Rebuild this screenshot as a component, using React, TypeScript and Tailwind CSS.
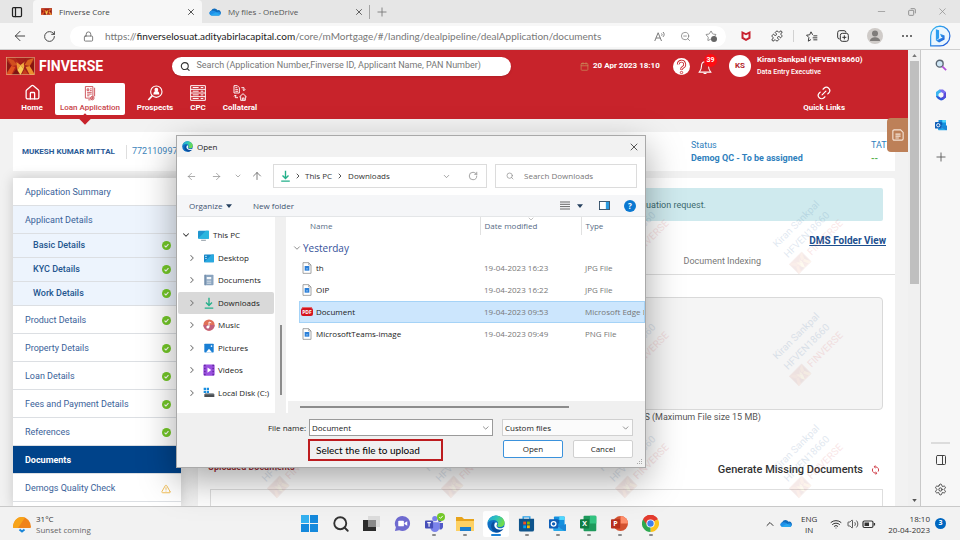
import React from "react";
import {
  AlertTriangle,
  ArrowLeft,
  ArrowRight,
  ArrowUp,
  Calendar,
  ChevronDown,
  ChevronRight,
  ChevronUp,
  House,
  Link2,
  Lock,
  Minus,
  PanelLeft,
  PanelRight,
  Plus,
  Puzzle,
  RotateCw,
  Search,
  Settings,
  Star,
  Volume2,
  Wifi,
  X,
  ZoomOut,
} from "lucide-react";

const rubik = "font-['Roboto','Liberation_Sans',sans-serif]";
const segoe = "font-['Open_Sans','Noto_Sans',sans-serif]";

type Cls = { className?: string };

/* ---------- logos ---------- */

function FinverseLogo({ className }: Cls) {
  return (
    <svg viewBox="0 0 28 18" className={className} aria-hidden="true" preserveAspectRatio="none">
      <rect width="28" height="18" fill="#9c1d1a" />
      <path d="M0 0h9l4 6-7 12H0z" fill="#b3281b" />
      <path d="M1 1l6 2 4 5-5 1z" fill="#d14f1f" />
      <path d="M0 18l5-9 4 1-4 8z" fill="#e0521f" />
      <path d="M1 4l4 5-4 6z" fill="#8a1715" />
      <path d="M9 0h11l-6 7z" fill="#a81f1a" />
      <path d="M10 5l4 3-3 5z" fill="#ef9434" />
      <path d="M14 8l5-4-2 8z" fill="#f3ab40" />
      <path d="M11 13l3-5 3 4-3 6z" fill="#f7cc55" />
      <path d="M28 0h-8l-3 7 5 11h6z" fill="#a3211a" />
      <path d="M27 1l-6 2-3 5 5 1z" fill="#d9641f" />
      <path d="M28 18l-5-9-4 1 4 8z" fill="#ec8f2d" />
      <path d="M27 4l-4 5 4 6z" fill="#86150f" />
      <path d="M6 18l4-6 3 6z" fill="#7b1513" />
      <path d="M15 18l3-6 4 6z" fill="#c4391c" />
      <rect x=".5" y=".5" width="27" height="17" fill="none" stroke="#e8b48a" strokeWidth=".6" />
    </svg>
  );
}

function Cloud({ className }: Cls) {
  return (
    <svg viewBox="0 0 24 16" className={className} aria-hidden="true">
      <path d="M5 14.500A5 5 0 0 1 4.600 5 7 7 0 0 1 17 4.500 5.200 5.200 0 0 1 20 14.500z" fill="#0f6cbd" />
      <path d="M6 6c4-1 7 1 9 3 2-2 6-2 7.500 0 1.500 2.500 0 6-3 6.200H6.500C2 15 0 12 .7 9.500 1.400 7 3.500 6 6 6z" fill="#1f8fe8" />
      <path d="M3 14l11-5.500 8.500 4.500c-.8 1.500-2 2.200-3.500 2.200H6.500C5 15.200 3.800 14.800 3 14z" fill="#28a8f0" />
    </svg>
  );
}

function EdgeLogo({ className }: Cls) {
  return (
    <svg viewBox="0 0 24 24" className={className} aria-hidden="true">
      <defs>
        <linearGradient id="edgeTop" x1="0" y1="0" x2="1" y2=".4">
          <stop offset="0" stopColor="#1fa4e0" />
          <stop offset=".55" stopColor="#30c6b8" />
          <stop offset="1" stopColor="#6fdc4b" />
        </linearGradient>
      </defs>
      <circle cx="12" cy="12" r="11.500" fill="#0f6fc4" />
      <path d="M.8 11C1.500 5 6 .5 12 .5c7 0 11.500 5 11.500 9.800 0 3.700-2.800 5.700-6 5.700-2.700 0-3.800-1-3.800-1.800s1-1.200 1-3C14.700 8.500 12 6.800 9 6.800 5 6.800 1.800 8.500.8 11z" fill="url(#edgeTop)" />
      <path d="M9 8.500c-2.500 1.600-4 4.300-3.500 7.500.6 4 4 7 8 7.300 3.600-.2 6.800-2.200 8.500-5-2.500 1.500-7.500 2-10.500-.4C9 16 8.500 13 9.800 10.500z" fill="#0a4f9e" />
      <path d="M13.700 11c0 1.500-1 2-1 3.200 0 1.800 2 3.600 5 3.600 2 0 4.500-.8 5.500-2l-.9 2.600c-2.600 1.500-7.700 1.700-10.500-.8-2.400-2-2.600-5-.9-7.300 1.300-.6 2.800-.3 2.800.7z" fill="#fff" />
    </svg>
  );
}

function OutlookLogo({ className }: Cls) {
  return (
    <svg viewBox="0 0 24 24" className={className} aria-hidden="true">
      <rect x="7" y="2" width="15" height="14" rx="1" fill="#1490df" />
      <rect x="14.500" y="2" width="7.500" height="5" fill="#50d9ff" />
      <rect x="7" y="7" width="7.500" height="5" fill="#0a64ad" />
      <path d="M6 13l9 5 9-5v8a1.500 1.500 0 0 1-1.500 1.500h-15A1.500 1.500 0 0 1 6 21z" fill="#28a8ea" />
      <path d="M24 13v8a1.500 1.500 0 0 1-1.500 1.500L11 16z" fill="#1a86d6" />
      <rect x="0" y="6" width="13" height="13" rx="1.200" fill="#0f5fb8" />
      <circle cx="6.500" cy="12.500" r="3.300" fill="none" stroke="#fff" strokeWidth="1.800" />
    </svg>
  );
}

function BingLogo({ className }: Cls) {
  return (
    <svg viewBox="0 0 24 24" className={className} aria-hidden="true">
      <defs>
        <linearGradient id="bing" x1="0" y1="0" x2="1" y2="1">
          <stop offset="0" stopColor="#37bdf3" />
          <stop offset="1" stopColor="#1b4fd6" />
        </linearGradient>
      </defs>
      <path d="M12 1.200a10.800 10.800 0 1 1 0 21.600H1.800V12A10.500 10.500 0 0 1 12 1.200z" fill="#eaf6fe" stroke="url(#bing)" strokeWidth="1.300" />
      <path d="M7.500 4.500l3.500 1.200v8.800L7.500 17z" fill="#2a9df0" />
      <path d="M7.500 17l3.500 2.200 6-3.500v-4.200l-5-2 1.300 3.200 1.700.9z" fill="url(#bing)" />
    </svg>
  );
}

function Microsoft365({ className }: Cls) {
  return (
    <svg viewBox="0 0 24 24" className={className} aria-hidden="true">
      <path d="M9 1h7l6 5v6l-5-3-5-3-5 3z" fill="#7a6ff0" />
      <path d="M9 1L2 6v10l5 4V10l5-4z" fill="#3bb5f0" />
      <path d="M2 14l6 1 4 3 5-3 5-3v5l-6 5-4 1-6-3z" fill="#2b57d8" />
      <path d="M22 7v8l-5 5-5-2 5-3V9z" fill="#5a4bd8" />
      <path d="M12 8l4 2v4l-4 2-4-2v-4z" fill="#f7f7f7" />
    </svg>
  );
}

function McAfee({ className }: Cls) {
  return (
    <svg viewBox="0 0 20 20" className={className} aria-hidden="true">
      <path d="M1 0l9 4.500L19 0v15l-9 5-9-5z" fill="#c8202f" />
      <path d="M5 6l5 2.600L15 6v6.700L10 15.500l-5-2.800z" fill="#f7f7f7" />
    </svg>
  );
}

function CheckBadge({ className }: Cls) {
  return (
    <svg viewBox="0 0 16 16" className={className} role="img" aria-label="Completed">
      <circle cx="8" cy="8" r="8" fill="#74c928" />
      <path d="M4.500 8.200l2.500 2.500 4.500-5" fill="none" stroke="#fff" strokeWidth="2" />
    </svg>
  );
}

/* ---------- page header icons ---------- */

function LoanIcon({ className }: Cls) {
  return (
    <svg viewBox="0 0 20 26" className={className} fill="none" stroke="currentColor" strokeWidth="1.500" aria-hidden="true">
      <path d="M2 1h13v20H2zM5 5h3v3H5zM10 5h3M10 8h3M5 11h8M5 14h8M5 17h4M18 3v15" />
      <circle cx="14" cy="21" r="3" fill="#fff" />
      <path d="M14 19v4M12 21h4M7 24h4" />
    </svg>
  );
}

function ProspectIcon({ className }: Cls) {
  return (
    <svg viewBox="0 0 24 24" className={className} fill="none" stroke="currentColor" strokeWidth="1.700" aria-hidden="true">
      <circle cx="14" cy="10" r="8.500" />
      <path d="M8 16l-6 6.500" strokeWidth="2.500" />
      <circle cx="14" cy="7" r="2" fill="currentColor" />
      <path d="M10.500 13.500c0-5 7-5 7 0z" fill="currentColor" />
    </svg>
  );
}

function CpcIcon({ className }: Cls) {
  return (
    <svg viewBox="0 0 24 24" className={className} fill="none" stroke="currentColor" strokeWidth="1.500" aria-hidden="true">
      <path d="M1 1h22v22H1zM1 6.500h22M1 12h22M1 17.500h22M4 3.800h9M16 3.800h4M4 9.300h9M16 9.300h4M4 14.800h9M16 14.800h4M4 20.300h9M16 20.300h4" />
    </svg>
  );
}

function CollateralIcon({ className }: Cls) {
  return (
    <svg viewBox="0 0 24 24" className={className} fill="none" stroke="currentColor" strokeWidth="1.400" aria-hidden="true">
      <path d="M3 1h5l3 3v8H3zM5 4h3M5 7h4M5 9.500h4M14 4h4v4M16 6.500l2 2 2-2M5 15v4h4M3 17l2-2 2 2" />
      <path d="M11 18l5.500-5 5.500 5M13 17v6h7v-6M15.500 23v-3.500h2.500V23" />
    </svg>
  );
}

function HelpIcon({ className }: Cls) {
  return (
    <svg viewBox="0 0 24 24" className={className} fill="none" aria-hidden="true">
      <circle cx="12" cy="12" r="12" fill="#fff" />
      <path d="M7.500 9a4.500 4.500 0 1 1 6.500 4c-1.500 1-2 1.500-2 3.500" stroke="#c8232b" strokeWidth="4" />
      <path d="M7.500 9a4.500 4.500 0 1 1 6.500 4c-1.500 1-2 1.500-2 3" stroke="#fff" strokeWidth="1.500" />
      <circle cx="12" cy="20.500" r="1.700" stroke="#c8232b" strokeWidth="1.200" />
    </svg>
  );
}

function BellIcon({ className }: Cls) {
  return (
    <svg viewBox="0 0 24 26" className={className} fill="none" stroke="#fff" strokeWidth="1.800" aria-hidden="true">
      <path d="M12 3c-4 0-6 3-6 7 0 6-2 8-4 11h20c-2-3-4-5-4-11 0-4-2-7-6-7zM9.500 23.500h5M12 3V1" />
    </svg>
  );
}

function SyncIcon({ className }: Cls) {
  return (
    <svg viewBox="0 0 20 22" className={className} fill="none" stroke="#d0404a" strokeWidth="2.200" aria-hidden="true">
      <path d="M10 4a7 7 0 0 1 6 10.500M10 18A7 7 0 0 1 4 7.500" />
      <path d="M10 0v8L6 4zM10 22v-8l4 4z" fill="#d0404a" stroke="none" />
    </svg>
  );
}

/* ---------- dialog icons ---------- */

function DownloadGlyph({ className }: Cls) {
  return (
    <svg viewBox="0 0 12 14" className={className} fill="none" stroke="#23b08a" strokeWidth="1.600" aria-hidden="true">
      <path d="M6 1v9M2.500 6.500L6 10l3.500-3.500M1 13h10" />
    </svg>
  );
}

function PcGlyph({ className }: Cls) {
  return (
    <svg viewBox="0 0 16 14" className={className} aria-hidden="true">
      <rect x="1" y="1" width="14" height="10" rx="1" fill="#1f95cf" />
      <path d="M1 11L11 1h4v10z" fill="#2bb6df" />
      <path d="M5 12.500h6v1H5z" fill="#6c7a86" />
    </svg>
  );
}

function DesktopGlyph({ className }: Cls) {
  return (
    <svg viewBox="0 0 16 14" className={className} aria-hidden="true">
      <rect x="1" y="2" width="14" height="11" rx="1" fill="#1486c8" />
      <path d="M1 13L12 2h3v11z" fill="#29a9e0" />
      <path d="M3 4h1.500v1.500H3zM3 7h1.500v1.500H3z" fill="#fff" />
    </svg>
  );
}

function DocumentsGlyph({ className }: Cls) {
  return (
    <svg viewBox="0 0 14 16" className={className} aria-hidden="true">
      <rect x="1" y="1" width="12" height="14" rx="1" fill="#8aa4bf" />
      <path d="M4 4h6v3H4zM4 9h6v1H4zM4 11.500h6v1H4z" fill="#f2f6fa" />
      <path d="M1 1h1.500v14H1z" fill="#6a86a4" />
    </svg>
  );
}

function MusicGlyph({ className }: Cls) {
  return (
    <svg viewBox="0 0 16 16" className={className} aria-hidden="true">
      <circle cx="8" cy="8" r="7.500" fill="#e07058" />
      <path d="M.5 8a7.500 7.500 0 0 0 15 0z" fill="#c1607c" />
      <circle cx="6.500" cy="10.500" r="2" fill="#fff" />
      <path d="M8 10.500V4l3 1.200" fill="none" stroke="#fff" strokeWidth="1.200" />
    </svg>
  );
}

function PicturesGlyph({ className }: Cls) {
  return (
    <svg viewBox="0 0 16 16" className={className} aria-hidden="true">
      <rect x=".5" y="1" width="15" height="14" rx="1" fill="#1a7fd4" />
      <path d="M3 15l5-6 5 6z" fill="#fff" />
      <circle cx="12" cy="5" r="1.300" fill="#fff" />
    </svg>
  );
}

function VideosGlyph({ className }: Cls) {
  return (
    <svg viewBox="0 0 16 16" className={className} aria-hidden="true">
      <rect x=".5" y=".5" width="15" height="15" rx="1.500" fill="#9a4fdf" />
      <path d="M6 4.500l5 3.500-5 3.500z" fill="#fff" />
      <path d="M2.500 1v14M13.500 1v14" stroke="#4b1c86" strokeWidth="1.500" strokeDasharray="2 2" />
    </svg>
  );
}

function DiskGlyph({ className }: Cls) {
  return (
    <svg viewBox="0 0 18 16" className={className} aria-hidden="true">
      <path d="M1 0h3.500v3.500H1zM5.500 0H9v3.500H5.500zM1 4.500h3.500V8H1zM5.500 4.500H9V8H5.500z" fill="#1a8fe0" />
      <path d="M2 10l2-1.500h11L17 10v4H2z" fill="#4a4f54" />
      <path d="M2 10l2-1.500h11L17 10z" fill="#a9b0b6" />
    </svg>
  );
}

function ImageFile({ className }: Cls) {
  return (
    <svg viewBox="0 0 14 18" className={className} aria-hidden="true">
      <path d="M1 1h8.500L13 4.500V17H1z" fill="#fff" stroke="#8d8d8d" strokeWidth="1.200" />
      <path d="M9.500 1v3.500H13" fill="none" stroke="#8d8d8d" />
      <rect x="3.500" y="6" width="7" height="7" fill="#2b7fd8" />
      <path d="M5.500 11l1.500-2 1.500 2z" fill="#bfe0fb" />
    </svg>
  );
}

function PdfFile() {
  return (
    <span className="flex h-2.5 w-3 flex-col">
      <span className="mx-px h-px bg-[#e26a6d]" />
      <span className="flex h-2 items-center justify-center rounded-xs bg-[#d5151f] text-[5px] leading-none font-bold text-white">PDF</span>
    </span>
  );
}

/* ---------- browser chrome ---------- */

function TabStrip() {
  return (
    <div className="flex h-[23px] shrink-0 items-end bg-[#e6e6e6] pr-3 text-[8px]">
      <button aria-label="Tab actions" className="flex h-full w-[33px] items-center justify-center">
        <PanelLeft className="size-3 text-[#222]" strokeWidth={2.5} />
      </button>
      <div className="flex h-full w-[169px] items-center rounded-t bg-[#f7f7f7] pr-1 pl-2">
        <FinverseLogo className="h-[7px] w-[11px]" />
        <span className="ml-[7px] flex-1 text-[#444]">Finverse Core</span>
        <button aria-label="Close tab Finverse Core" className="px-0.5"><X className="size-2.5 text-[#333]" /></button>
      </div>
      <div className="flex h-full w-[167px] items-center pr-[3px] pl-[7px]">
        <Cloud className="h-2 w-3" />
        <span className="ml-[7px] flex-1 text-[#555]">My files - OneDrive</span>
        <button aria-label="Close tab My files" className="px-0.5"><X className="size-2.5 text-[#444]" /></button>
      </div>
      <span className="mb-1 h-3.5 w-px bg-[#a5a5a5]" />
      <button aria-label="New tab" className="flex h-full w-[24px] items-center justify-center"><Plus className="size-3.5 text-[#777]" strokeWidth={1.5} /></button>
      <div className="ml-auto flex h-full items-center gap-[21px] text-[#8a8a8a]">
        <button aria-label="Minimize"><Minus className="size-[11px]" strokeWidth={1.5} /></button>
        <button aria-label="Restore">
          <svg viewBox="0 0 12 12" className="size-2" fill="none" stroke="currentColor" strokeWidth="1.400"><rect x="1" y="3.500" width="7.500" height="7.500" rx="1" /><path d="M4 1h5.500A1.500 1.500 0 0 1 11 2.500V8" /></svg>
        </button>
        <button aria-label="Close window"><X className="size-[11px]" strokeWidth={1.500} /></button>
      </div>
    </div>
  );
}

function Toolbar() {
  return (
    <div className="flex h-[27px] shrink-0 items-center border-b border-[#cfcfcf] bg-[#f7f7f7] pl-3">
      <button aria-label="Back" className="w-[31px]"><ArrowLeft className="size-4 text-[#444]" strokeWidth={1.500} /></button>
      <button aria-label="Refresh" className="w-[27px]"><RotateCw className="size-[13px] text-[#444]" strokeWidth={1.800} /></button>
      <div className="flex h-[21px] flex-1 items-center rounded-full bg-white pr-[9px] pl-[13px]">
        <Lock className="size-[11px] text-[#666]" strokeWidth={1.800} />
        <div role="textbox" aria-label="Address" contentEditable suppressContentEditableWarning className="ml-[11px] flex-1 font-['Lato',sans-serif] text-[10px] whitespace-nowrap text-[#777]">
          https://<span className="text-[#222]">finverselosuat.adityabirlacapital.com</span>/core/mMortgage/#/landing/dealpipeline/dealApplication/documents
        </div>
        <div className="flex items-center gap-[14px] text-[#777]">
          <button aria-label="Read aloud">
            <svg viewBox="0 0 16 14" className="h-[11px] w-3" fill="none" stroke="currentColor" strokeWidth="1.300"><path d="M1 13L5.500 2 10 13M2.500 9h6M10 3c1 1 1 2 0 3M12 1c2 2 2 4.500 0 6.500" /></svg>
          </button>
          <button aria-label="Zoom out"><ZoomOut className="size-[11px]" strokeWidth={1.600} /></button>
          <button aria-label="Add to favorites" className="flex items-end"><Star className="size-3" strokeWidth={1.600} /><span className="-ml-1.5 size-1.5 rounded-full bg-[#666]" /></button>
        </div>
      </div>
      <div className="ml-[15px] flex items-center text-[#333]">
        <button aria-label="McAfee WebAdvisor"><McAfee className="size-2.5" /></button>
        <button aria-label="Extensions" className="ml-5"><Puzzle className="size-3" strokeWidth={1.800} /></button>
        <span className="ml-2.5 h-3 w-px bg-[#d2d2d2]" />
        <button aria-label="Favorites" className="ml-3">
          <svg viewBox="0 0 18 16" className="h-[11px] w-3" fill="none" stroke="currentColor" strokeWidth="1.400"><path d="M10 5.500L7.500 1 5.500 5.500.8 6 4.300 9.500 3.500 15l4-2.500M11 7h6M10 10h7M11 13h6" /></svg>
        </button>
        <button aria-label="Collections" className="ml-[19px]">
          <svg viewBox="0 0 18 18" className="size-3" fill="none" stroke="currentColor" strokeWidth="1.500"><path d="M4 13.500A3 3 0 0 1 1 10.500V4a3 3 0 0 1 3-3h6.500a3 3 0 0 1 3 3" /><rect x="5" y="5" width="12" height="12" rx="3" /><path d="M11 8v6M8 11h6" /></svg>
        </button>
        <button aria-label="Profile" className="ml-[18px] flex size-4 items-center justify-center overflow-hidden rounded-full bg-[#cfcbc8]">
          <svg viewBox="0 0 16 16" className="size-4" fill="#7f7c7a"><circle cx="8" cy="5.500" r="3" /><path d="M3 13c0-5 10-5 10 0z" /></svg>
        </button>
        <button aria-label="More" className="ml-[19px] flex gap-0.5"><span className="size-0.5 rounded-full bg-[#444]" /><span className="size-0.5 rounded-full bg-[#444]" /><span className="size-0.5 rounded-full bg-[#444]" /></button>
      </div>
      <button aria-label="Bing" className="z-10 flex w-12 justify-end pr-[9px]"><BingLogo className="size-[22px] shrink-0" /></button>
    </div>
  );
}

/* ---------- application page ---------- */

const navItems = [
  { label: "Home", icon: <House className="size-[17px]" strokeWidth={1.800} />, box: "w-[46px]" },
  { label: "Loan Application", icon: <LoanIcon className="h-[15px] w-3" />, box: "w-[70px]" },
  { label: "Prospects", icon: <ProspectIcon className="size-4" />, box: "w-[60px]" },
  { label: "CPC", icon: <CpcIcon className="size-4" />, box: "w-[26px]" },
  { label: "Collateral", icon: <CollateralIcon className="size-4" />, box: "w-[58px]" },
];

function AppHeader() {
  return (
    <header className="h-[69px] shrink-0 bg-[#c8232b] text-white">
      <div className="flex h-8 items-center pl-1.5">
        <FinverseLogo className="h-[18px] w-[29px]" />
        <span className="ml-1 w-[133px] text-[14px] font-bold">FINVERSE</span>
        <label className="flex h-[19px] w-[339px] items-center rounded-full bg-white px-2 shadow-sm">
          <Search className="size-[11px] text-[#333]" strokeWidth={2.500} />
          <input aria-label="Search applications" placeholder="Search (Application Number,Finverse ID, Applicant Name, PAN Number)" className="ml-1.5 w-full text-[9px] outline-none placeholder:text-[#777]" />
        </label>
        <span className="ml-auto flex w-[93px] items-center gap-1 text-[8px] font-bold whitespace-nowrap">
          <Calendar className="size-[9px] text-[#c98a5a]" strokeWidth={2} />
          20 Apr 2023 18:10
        </span>
        <button aria-label="Help"><HelpIcon className="size-[17px]" /></button>
        <button aria-label="Notifications" className="relative ml-2 pt-0.5">
          <BellIcon className="h-[15px] w-3.5" />
          <span className="absolute -top-1 left-1.5 flex size-[13px] items-center justify-center rounded-full bg-[#ff0c12] text-[7px] font-bold">39</span>
        </button>
        <span className="ml-[17px] flex size-[22px] items-center justify-center rounded-full bg-white text-[8px] font-bold text-[#b3262c]">KS</span>
        <div className="ml-1.5 w-[151px] leading-3">
          <p className="text-[8px] font-bold">Kiran Sankpal (HFVEN18660)</p>
          <p className="text-[7px] font-medium">Data Entry Executive</p>
        </div>
      </div>
      <nav className="flex h-[37px] pr-[63px] pl-[9px]">
        {navItems.map((n) => {
          const on = n.label === "Loan Application";
          return (
            <a
              key={n.label}
              href="#"
              className={`relative mt-px flex h-8 shrink-0 flex-col items-center justify-center gap-px text-[8px] leading-[12px] whitespace-nowrap ${n.box} ${on ? "rounded-xs bg-white pt-px font-medium text-[#c8434a]" : "font-bold"}`}
            >
              {n.icon}
              {n.label}
              {on && <span className="absolute -bottom-2 left-[26px] size-2 rotate-45 bg-[#c8232b]" />}
            </a>
          );
        })}
        <a href="#" className="mt-px ml-auto flex h-8 flex-col items-center justify-center gap-px text-[8px] leading-[12px] font-bold">
          <Link2 className="size-4 -rotate-45" strokeWidth={1.800} />
          Quick Links
        </a>
      </nav>
    </header>
  );
}

const menu: { label: string; kind?: "open" | "sub" | "active"; mark?: "ok" | "warn" }[] = [
  { label: "Application Summary" },
  { label: "Applicant Details", kind: "open" },
  { label: "Basic Details", kind: "sub", mark: "ok" },
  { label: "KYC Details", kind: "sub", mark: "ok" },
  { label: "Work Details", kind: "sub", mark: "ok" },
  { label: "Product Details", mark: "ok" },
  { label: "Property Details", mark: "ok" },
  { label: "Loan Details", mark: "ok" },
  { label: "Fees and Payment Details", mark: "ok" },
  { label: "References", mark: "ok" },
  { label: "Documents", kind: "active" },
  { label: "Demogs Quality Check", mark: "warn" },
];

function SideMenu() {
  return (
    <nav className="w-[168px] shrink-0 bg-white text-[9px] shadow-[0_0_12px_rgba(0,0,0,0.18)]">
      {menu.map((m) => (
        <a
          key={m.label}
          href="#"
          className={`flex items-center justify-between border-b border-[#dcdfe3] pr-2.5 ${
            m.kind === "sub"
              ? "h-6 bg-[#edf4fd] pl-5 font-medium text-[#24568f]"
              : m.kind === "active"
                ? "h-7 bg-[#00438a] pt-0.5 pl-3 font-bold text-white"
                : m.kind === "open"
                  ? "h-7 bg-[#edf4fd] pt-0.5 pl-3 text-[#3a6299]"
                  : "h-7 bg-white pt-0.5 pl-3 text-[#3a6299]"
          }`}
        >
          {m.label}
          {m.mark === "ok" && <CheckBadge className="size-[9px]" />}
          {m.mark === "warn" && <AlertTriangle className="size-2.5 text-[#f0b43a]" strokeWidth={2} />}
        </a>
      ))}
    </nav>
  );
}

const stamps = [false, false, true, true, false, false, true, true, true, true, true, true];

function Watermarks() {
  return (
    <div className="pointer-events-none absolute inset-x-0 top-0 grid grid-cols-[repeat(4,174px)] opacity-15" aria-hidden="true">
      {stamps.map((on, i) => (
        <div key={i} className="flex h-28 items-center justify-center">
          {on && (
            <div className="flex -rotate-45 flex-col items-center text-[10px] leading-[15px] whitespace-nowrap text-[#3a6aa0]">
              <span>Kiran Sankpal</span>
              <span>HFVEN18660</span>
              <span className="flex items-center gap-1 text-[#d8575d]"><FinverseLogo className="h-3.5 w-[18px] opacity-60" />FINVERSE</span>
            </div>
          )}
        </div>
      ))}
    </div>
  );
}

function DocumentsPanel() {
  return (
    <main className="relative flex flex-1 flex-col overflow-hidden rounded-t-xs bg-white">
      <div className="mx-3 mt-2.5 flex h-[33px] shrink-0 items-center justify-end rounded-xs bg-[#cfeaee] pt-0.5 pr-[177px] text-[9px] text-[#3d6a70]">uation request.</div>
      <div className="flex h-[39px] shrink-0 items-center justify-end pr-[9px]">
        <a href="#" className="text-[10px] font-bold text-[#1c4f8f] underline">DMS Folder View</a>
      </div>
      <div className="flex h-[15px] shrink-0 justify-end border-b border-[#dedede] pr-[134px]">
        <button className="-mt-2.5 text-[9px] text-[#777]">Document Indexing</button>
      </div>
      <div className="mx-3 mt-[22px] h-[113px] shrink-0 rounded border border-[#d9d9d9] bg-[#f5f5f5]" />
      <p className="mt-px pr-[134px] text-right text-[9px] leading-[13px] text-[#555]">S (Maximum File size 15 MB)</p>
      <div className="mt-[34px] flex items-center justify-between pr-[15px] pl-2.5">
        <h2 className="text-[9px] font-bold text-[#a3343a]">Uploaded Documents</h2>
        <div className="flex items-center gap-2 pt-1">
          <span className="text-[11px] leading-4 font-medium text-[#333]">Generate Missing Documents</span>
          <button aria-label="Refresh missing documents"><SyncIcon className="h-2.5 w-[9px]" /></button>
        </div>
      </div>
      <div className="mx-3 mt-[11px] flex-1 border border-b-0 border-[#dedede]" />
      <Watermarks />
    </main>
  );
}

function CustomerBar() {
  return (
    <section className="mx-[13px] mt-[13px] flex h-[39px] shrink-0 items-center bg-white pr-2 pl-[9px]">
      <span className="w-[105px] border-r border-[#dedede] py-px text-[8px] font-bold whitespace-nowrap text-[#2a5a96]">MUKESH KUMAR MITTAL</span>
      <span className="ml-[5px] text-[9px] text-[#3d85bb]">772110997</span>
      <div className="ml-auto w-[180px] leading-[13px] text-[#2f7fbd]">
        <p className="text-[9px]">Status</p>
        <p className="text-[9px] font-bold">Demog QC - To be assigned</p>
      </div>
      <div className="w-4 leading-[13px] text-[#2f7fbd]">
        <p className="text-[9px]">TAT</p>
        <p className="text-[9px] font-bold text-[#55b04d]">--</p>
      </div>
    </section>
  );
}

/* ---------- file dialog ---------- */

const tree = [
  { label: "Desktop", icon: <DesktopGlyph className="h-2.5 w-3" /> },
  { label: "Documents", icon: <DocumentsGlyph className="h-3 w-3" /> },
  { label: "Downloads", icon: <DownloadGlyph className="h-3 w-3" /> },
  { label: "Music", icon: <MusicGlyph className="h-3 w-3" /> },
  { label: "Pictures", icon: <PicturesGlyph className="h-2.5 w-3" /> },
  { label: "Videos", icon: <VideosGlyph className="h-3 w-3" /> },
  { label: "Local Disk (C:)", icon: <DiskGlyph className="h-3 w-3" /> },
];

const files = [
  { name: "th", date: "19-04-2023 16:23", type: "JPG File" },
  { name: "OIP", date: "19-04-2023 16:22", type: "JPG File" },
  { name: "Document", date: "19-04-2023 09:53", type: "Microsoft Edge D" },
  { name: "MicrosoftTeams-image", date: "19-04-2023 09:49", type: "PNG File" },
];

function FileDialog() {
  return (
    <div role="dialog" aria-label="Open" className={`absolute top-[135px] left-44 z-20 flex w-[470px] flex-col border border-[#a9a9a9] bg-white text-[8px] text-[#222] shadow-[0_12px_34px_rgba(0,0,0,0.35)] ${segoe}`}>
      <div className="flex h-[21px] items-center bg-[#f2f2f2] pr-[5px] pl-[5px]">
        <EdgeLogo className="size-[11px]" />
        <span className="ml-1 flex-1">Open</span>
        <button aria-label="Close dialog"><X className="size-3" strokeWidth={1.500} /></button>
      </div>
      <div className="flex h-[38px] items-center pr-2 pl-[9px] text-[#888]">
        <button aria-label="Back" className="w-[25px]"><ArrowLeft className="size-[11px]" strokeWidth={1.500} /></button>
        <button aria-label="Forward" className="w-[23px]"><ArrowRight className="size-[11px]" strokeWidth={1.500} /></button>
        <button aria-label="Recent" className="w-[17px]"><ChevronDown className="size-2" strokeWidth={2} /></button>
        <button aria-label="Up" className="w-[22px]"><ArrowUp className="size-3 text-[#555]" strokeWidth={1.500} /></button>
        <div className="flex h-6 flex-1 items-center border border-[#dcdcdc] pr-2 pl-1.5 text-[#333]">
          <DownloadGlyph className="h-3 w-[11px]" />
          <ChevronRight className="mx-[3px] size-2" strokeWidth={2.500} />
          <button>This PC</button>
          <ChevronRight className="mx-1 size-2" strokeWidth={2.500} />
          <button>Downloads</button>
          <button aria-label="Previous locations" className="ml-auto"><ChevronDown className="size-[9px] text-[#777]" strokeWidth={1.800} /></button>
          <button aria-label="Refresh folder" className="ml-[17px]"><RotateCw className="size-2.5 text-[#888]" strokeWidth={1.800} /></button>
        </div>
        <label className="ml-2 flex h-6 w-[142px] items-center border border-[#dcdcdc] pl-2.5">
          <Search className="size-2 text-[#888]" strokeWidth={2} />
          <input aria-label="Search Downloads" placeholder="Search Downloads" className="ml-2.5 w-[110px] outline-none placeholder:text-[#777]" />
        </label>
      </div>
      <div className="flex h-[22px] items-center border-b border-[#e4e6e8] bg-[#f5f6f8] pr-[9px] pl-3 text-[#3d5270]">
        <button className="flex w-16 items-center gap-1">Organize <svg viewBox="0 0 8 5" className="h-1 w-1.5"><path d="M0 0h8L4 5z" fill="#26415f" /></svg></button>
        <button>New folder</button>
        <button aria-label="View" className="ml-auto"><svg viewBox="0 0 10 9" className="h-[9px] w-2.5"><path d="M0 1h10M0 3.300h10M0 5.600h10M0 8h10" stroke="#666" /></svg></button>
        <button aria-label="View options" className="ml-[7px]"><svg viewBox="0 0 8 5" className="h-1 w-1.5"><path d="M0 0h8L4 5z" fill="#26415f" /></svg></button>
        <button aria-label="Preview pane" className="ml-4"><svg viewBox="0 0 12 10" className="h-[9px] w-[11px]"><rect x=".5" y=".5" width="11" height="9" fill="#fff" stroke="#2d4a63" /><path d="M7.500 1H11v8H7.500z" fill="#2b9be0" /></svg></button>
        <button aria-label="Help" className="ml-3.5 flex size-3 items-center justify-center rounded-full bg-[#0a78d1] font-bold text-white">?</button>
      </div>
      <div className="flex h-[196px]">
        <div className="w-[98px] shrink-0 pt-[7px]">
          <ul className="flex h-[180px] flex-col">
            <li className="flex flex-1 items-center pl-1">
              <ChevronDown className="size-2.5 text-[#333]" strokeWidth={2.500} />
              <PcGlyph className="mr-[3px] ml-1.5 h-[11px] w-[13px]" />
              This PC
            </li>
            {tree.map((t) => (
              <li key={t.label} className={`mx-px flex flex-1 items-center rounded-xs pl-[9px] whitespace-nowrap ${t.label === "Downloads" ? "bg-[#d9d9d9]" : ""}`}>
                <ChevronRight className="size-2.5 shrink-0 text-[#777]" strokeWidth={2.500} />
                <span className="mr-[3px] ml-1.5 shrink-0">{t.icon}</span>
                {t.label}
              </li>
            ))}
          </ul>
        </div>
        <div className="flex w-[11px] shrink-0 justify-center bg-[#f0f0f0]"><span className="mt-[108px] h-[70px] w-0.5 bg-[#8c8c8c]" /></div>
        <div className="flex min-w-0 flex-1 flex-col">
          <div className="flex-1 overflow-hidden pl-[13px]">
            <table className="w-full table-fixed border-collapse text-left">
              <colgroup><col /><col className="w-[101px]" /><col className="w-16" /></colgroup>
              <thead>
                <tr className="h-[18px] text-[#566b85]">
                  <th className="border-r border-[#e1e1e1] p-0 pl-[11px] font-normal">Name</th>
                  <th className="relative border-r border-[#e1e1e1] p-0 pl-1 font-normal">Date modified<ChevronDown className="absolute -top-0.5 left-[46px] size-2 text-[#888]" strokeWidth={1.500} /></th>
                  <th className="p-0 pl-1 font-normal">Type</th>
                </tr>
              </thead>
              <tbody>
                <tr className="h-[22px]">
                  <th colSpan={3} scope="rowgroup" className="p-0 pt-1 font-normal">
                    <span className="-ml-[7px] flex items-center text-[10px] leading-[14px] text-[#35509a]"><ChevronDown className="mr-px size-2.5 text-[#777]" />Yesterday</span>
                  </th>
                </tr>
                {files.map((f) => (
                  <tr key={f.name} className={`h-[22px] ${f.name === "Document" ? "bg-[#cce6fd] outline -outline-offset-1 outline-[#a5d3f7]" : ""}`}>
                    <td className="p-0">
                      <span className="flex items-center gap-[3px] pl-0.5">
                        {f.name === "Document" ? <PdfFile /> : <ImageFile className="h-3 w-3" />}
                        {f.name}
                      </span>
                    </td>
                    <td className="p-0 pl-1 text-[#777]">{f.date}</td>
                    <td className="overflow-hidden p-0 pl-1 whitespace-nowrap text-[#777]">{f.type}</td>
                  </tr>
                ))}
              </tbody>
            </table>
          </div>
          <div className="ml-0.5 flex h-3 items-center bg-[#f0f0f0] pl-3"><span className="h-0.5 w-[269px] bg-[#8c8c8c]" /></div>
        </div>
      </div>
      <div className="flex h-[54px] flex-col bg-[#f0f0f0] pt-1.5 pr-3">
        <div className="flex h-[17px] items-center">
          <label htmlFor="file-name" className="w-[132px] pr-[3px] text-right">File name:</label>
          <span className="flex h-full w-[184px] items-center border border-[#9a9a9a] bg-white pr-0.5">
            <input id="file-name" defaultValue="Document" className="w-full pl-0.5 outline-none" />
            <ChevronDown className="size-2.5 text-[#666]" strokeWidth={1.800} />
          </span>
          <span className="ml-[9px] flex h-full flex-1 items-center border border-[#d0d0d0] bg-[#fbfbfb] pr-0.5">
            <select aria-label="File type" className="w-full appearance-none pl-0.5 outline-none"><option>Custom files</option></select>
            <ChevronDown className="size-2.5 text-[#666]" strokeWidth={1.800} />
          </span>
        </div>
        <div className="mt-[3px] flex h-[22px] items-start pl-[131px]">
          <div className="flex h-[22px] w-[135px] items-center border-2 border-[#bd1c1f] pt-px pl-1.5 font-['Lato',sans-serif] text-[10px] text-black">Select the file to upload</div>
          <button className="mt-px ml-auto h-[18px] w-[60px] rounded-xs border border-[#3b92dc] bg-white">Open</button>
          <button className="mt-px ml-2.5 h-[18px] w-[60px] rounded-xs border border-[#d0d0d0] bg-white">Cancel</button>
        </div>
      </div>
      <svg viewBox="0 0 6 6" className="absolute right-0.5 bottom-0.5 size-1.5" fill="#aaa" aria-hidden="true"><path d="M4 0h1v1H4zM4 2h1v1H4zM2 2h1v1H2zM4 4h1v1H4zM2 4h1v1H2zM0 4h1v1H0z" /></svg>
    </div>
  );
}

/* ---------- edge sidebar ---------- */

function EdgeSidebar() {
  return (
    <aside className="flex w-10 shrink-0 flex-col items-center border-l border-[#c9c9c9] bg-[#f7f7f7] pt-[9px] pb-2.5">
      <button aria-label="Search">
        <svg viewBox="0 0 14 14" className="size-3" fill="none"><circle cx="5.500" cy="5.500" r="4" stroke="#5b6672" strokeWidth="1.600" fill="#cfe6f5" /><path d="M8.500 8.500l4.500 4.500" stroke="#b04fd8" strokeWidth="2" /></svg>
      </button>
      <button aria-label="Microsoft 365" className="mt-[18px]"><Microsoft365 className="size-3" /></button>
      <button aria-label="Outlook" className="mt-[18px]"><OutlookLogo className="size-3" /></button>
      <button aria-label="Customize" className="mt-[19px]"><Plus className="size-3.5 text-[#555]" strokeWidth={1.500} /></button>
      <span className="mt-auto h-0.5 w-[19px] bg-[#dcdcdc]" />
      <button aria-label="Hide sidebar" className="mt-2.5"><PanelRight className="size-3 text-[#444]" strokeWidth={2} /></button>
      <button aria-label="Settings" className="mt-[17px]"><Settings className="size-[13px] text-[#444]" strokeWidth={1.800} /></button>
    </aside>
  );
}

/* ---------- taskbar ---------- */

function Letter({ l, tile, back, light }: { l: string; tile: string; back: string; light: string }) {
  return (
    <span className="relative block size-[17px]">
      <svg viewBox="0 0 24 24" className="size-[17px]" aria-hidden="true">
        <rect x="5" y="1" width="18" height="22" rx="1.500" fill={back} />
        <path d="M14 1h7.500A1.500 1.500 0 0 1 23 2.500V12h-9z" fill={light} />
        <rect x="0" y="6" width="13" height="13" rx="1.200" fill={tile} />
      </svg>
      <span className="absolute top-1 left-0 flex size-[9px] items-center justify-center text-[7px] leading-none font-bold text-white">{l}</span>
    </span>
  );
}

const tasks: { name: string; icon: React.ReactNode; run?: boolean; active?: boolean }[] = [
  { name: "Start", icon: <svg viewBox="0 0 17 17" className="size-[17px]"><path d="M0 0h8v8H0zM9 0h8v8H9zM0 9h8v8H0zM9 9h8v8H9z" fill="#1589dc" /><path d="M0 0h8v8H0z" fill="#35b1f0" /></svg> },
  { name: "Search", icon: <Search className="size-[18px] text-[#333]" strokeWidth={2.500} /> },
  { name: "Task View", icon: <svg viewBox="0 0 17 17" className="size-[17px]"><rect x="5" y="1" width="12" height="11" fill="#dcdcdc" /><rect x="0" y="5" width="13" height="11" fill="#2b2b2b" /><path d="M5 5h8v7H5z" fill="#8a8a8a" /></svg> },
  { name: "Chat", icon: <svg viewBox="0 0 18 18" className="size-[17px]"><path d="M9 1a8 8 0 1 1-3.500 15.200L1 17l1-4A8 8 0 0 1 9 1z" fill="#6f6bd0" /><rect x="4.500" y="6" width="6" height="6" rx="1" fill="#fff" /><path d="M11 8.500l3-2v5l-3-2z" fill="#fff" /></svg> },
  {
    name: "Teams", run: true,
    icon: (
      <span className="relative block size-[18px]">
        <svg viewBox="0 0 20 20" className="size-[18px]"><circle cx="11" cy="4" r="3" fill="#7b83eb" /><circle cx="16.500" cy="6" r="2" fill="#5059c9" /><path d="M6 8h10v6a5 5 0 0 1-10 0z" fill="#7b83eb" /><path d="M16 9h4v4a3 3 0 0 1-4 3z" fill="#5059c9" /><rect x="0" y="6" width="9" height="9" rx="1" fill="#464eb8" /><path d="M2.500 8.500h4M4.500 8.500v4.500" stroke="#fff" strokeWidth="1.200" /></svg>
        <CheckBadge className="absolute -top-0.5 -right-0.5 size-2" />
      </span>
    ),
  },
  { name: "File Explorer", run: true, icon: <svg viewBox="0 0 18 16" className="h-4 w-[18px]"><path d="M0 1h6l2 2h10v12H0z" fill="#e8a41c" /><path d="M0 5h18v10H0z" fill="#fdd164" /><path d="M4 11h11v4H4z" fill="#1b7fcf" /></svg> },
  { name: "Edge", run: true, active: true, icon: <EdgeLogo className="size-[18px]" /> },
  { name: "Microsoft Store", run: true, icon: <svg viewBox="0 0 18 18" className="size-[17px]"><path d="M5.500 5V2h7v3" fill="none" stroke="#2ba0e8" strokeWidth="1.500" /><path d="M1 4h16v11.500A2 2 0 0 1 15 17.500H3a2 2 0 0 1-2-2z" fill="#0f548c" /><path d="M5.500 7h3v3h-3z" fill="#f25022" /><path d="M9.500 7h3v3h-3z" fill="#7fba00" /><path d="M5.500 11h3v3h-3z" fill="#00a4ef" /><path d="M9.500 11h3v3h-3z" fill="#ffb900" /></svg> },
  { name: "Outlook", run: true, icon: <OutlookLogo className="size-[17px]" /> },
  { name: "Excel", run: true, icon: <Letter l="X" tile="#107c41" back="#1f9a5c" light="#33c481" /> },
  {
    name: "PowerPoint", run: true,
    icon: (
      <span className="relative block size-[17px]">
        <svg viewBox="0 0 24 24" className="size-[17px]" aria-hidden="true"><circle cx="13.500" cy="12" r="10.500" fill="#d35230" /><path d="M13.500 1.500A10.500 10.500 0 0 1 24 12H13.500z" fill="#ff8f6b" /><rect x="0" y="6" width="13" height="13" rx="1.200" fill="#b7301c" /></svg>
        <span className="absolute top-1 left-0 flex size-[9px] items-center justify-center text-[7px] leading-none font-bold text-white">P</span>
      </span>
    ),
  },
  {
    name: "Chrome", run: true,
    icon: (
      <svg viewBox="0 0 24 24" className="size-[17px]">
        <path d="M12 12L1.600 6A12 12 0 0 1 22.400 6z" fill="#e33b2e" />
        <path d="M12 12L22.400 6A12 12 0 0 1 12 24z" fill="#fcc31e" />
        <path d="M12 12v12A12 12 0 0 1 1.600 6z" fill="#2da94f" />
        <path d="M12 6h10.400A12 12 0 0 0 1.600 6L7 14z" fill="#e33b2e" />
        <circle cx="12" cy="12" r="5.800" fill="#fff" />
        <circle cx="12" cy="12" r="4.500" fill="#3f7fee" />
      </svg>
    ),
  },
];

function Taskbar() {
  return (
    <footer className={`grid h-[34px] shrink-0 grid-cols-[1fr_auto_1fr] items-center border-t border-[#c9c9c9] bg-[#f2f2f2] text-[8px] text-[#333] ${segoe}`}>
      <div className="flex items-center gap-[5px] pl-[13px]">
        <svg viewBox="0 0 18 18" className="size-[18px]" aria-hidden="true"><path d="M0 12A9 10 0 0 1 18 12q0 1-1 1H1q-1 0-1-1z" fill="#f0831a" /><path d="M0 12A9 10 0 0 1 12 2.500L5 13H1q-1 0-1-1z" fill="#f7a41a" /><path d="M6.500 14.500l2.500 2 2.500-2" fill="none" stroke="#1a86d8" strokeWidth="2" /></svg>
        <div className="leading-[11px]"><p>31°C</p><p className="text-[#666]">Sunset coming</p></div>
      </div>
      <div className="flex">
        {tasks.map((t) => (
          <button key={t.name} aria-label={t.name} className="relative flex h-[33px] w-[31px] items-center justify-center">
            <span className={`flex h-[26px] w-[26px] items-center justify-center rounded-xs ${t.active ? "bg-white" : ""}`}>{t.icon}</span>
            {t.run && <span className={`absolute bottom-1 h-0.5 rounded-full ${t.active ? "w-2.5 bg-[#1a7fd4]" : "w-1 bg-[#8a8a8a]"}`} />}
          </button>
        ))}
      </div>
      <div className="flex items-center justify-end pr-3.5">
        <ChevronUp className="size-3" strokeWidth={2} />
        <Cloud className="ml-1 h-[9px] w-3" />
        <div className="ml-2 w-[18px] text-center leading-[11px]"><p>ENG</p><p>IN</p></div>
        <Wifi className="ml-3 size-3" strokeWidth={2} />
        <Volume2 className="ml-[5px] size-3" strokeWidth={1.600} />
        <svg viewBox="0 0 14 10" className="ml-[3px] h-2.5 w-3.5" fill="none"><rect x="1" y="2" width="10" height="6.500" rx="1.500" stroke="#333" strokeWidth="1.200" /><path d="M2.500 3.500h4.500V7H2.500z" fill="#333" /><path d="M12.500 4v2.500" stroke="#333" strokeWidth="1.200" /></svg>
        <div className="ml-3 text-right leading-[11px]"><p>18:10</p><p>20-04-2023</p></div>
        <span className="ml-[5px] flex size-[11px] items-center justify-center rounded-full bg-[#0067c0] text-[7px] font-bold text-white">3</span>
      </div>
    </footer>
  );
}

export default function App() {
  return (
    <div className={`relative flex h-screen flex-col overflow-hidden bg-[#f2f2f2] ${segoe}`}>
      <TabStrip />
      <Toolbar />
      <div className="flex min-h-0 flex-1">
        <div className={`relative flex min-w-0 flex-1 flex-col overflow-hidden ${rubik}`}>
          <AppHeader />
          <CustomerBar />
          <div className="mx-[13px] mt-[7px] flex min-h-0 flex-1 gap-[17px]">
            <SideMenu />
            <DocumentsPanel />
          </div>
          <button aria-label="Notes" className="absolute top-[68px] right-0 flex h-[34px] w-[21px] items-center justify-center rounded-l bg-[#bd8058]">
            <svg viewBox="0 0 14 14" className="size-3" fill="none" stroke="#f5e3d6" strokeWidth="1.300"><path d="M2.500 1H10l3 3v7.500a1.500 1.500 0 0 1-1.500 1.500h-9A1.500 1.500 0 0 1 1 11.500v-9A1.500 1.500 0 0 1 2.500 1zM4 6h6M4 8.300h6M4 10.500h4" /></svg>
          </button>
        </div>
        <div className="flex w-3 shrink-0 flex-col items-center bg-[#f0f0f0] py-1">
          <svg viewBox="0 0 6 4" className="h-[3px] w-[5px]"><path d="M0 4h6L3 0z" fill="#777" /></svg>
          <span className="mt-1 h-[223px] w-[9px] bg-[#bfbfbf]" />
          <svg viewBox="0 0 6 4" className="mt-auto h-[3px] w-[5px]"><path d="M0 0h6L3 4z" fill="#555" /></svg>
        </div>
        <EdgeSidebar />
      </div>
      <Taskbar />
      <FileDialog />
    </div>
  );
}
